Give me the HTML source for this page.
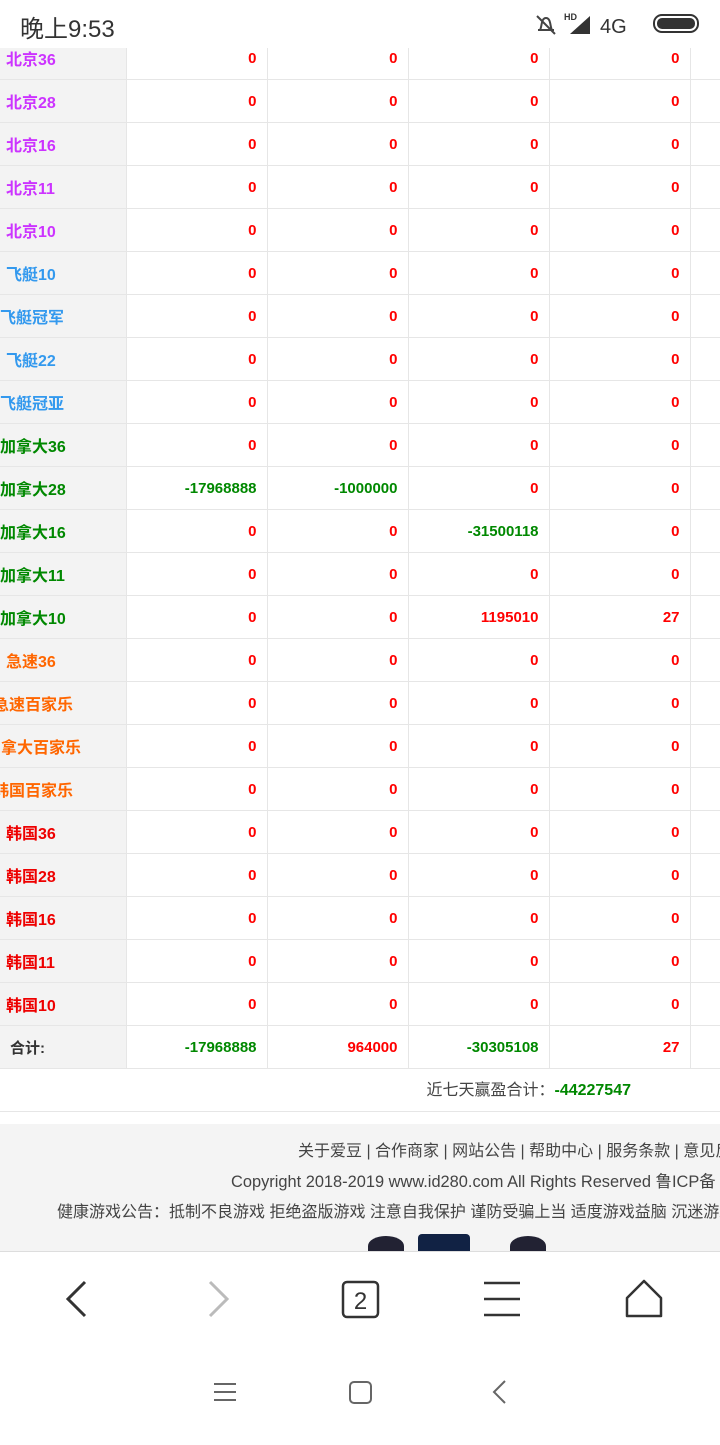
<!DOCTYPE html>
<html><head><meta charset="utf-8"><style>
*{margin:0;padding:0;box-sizing:border-box}
body{width:720px;height:1440px;overflow:hidden;background:#fff;font-family:"Liberation Sans","Noto Sans CJK SC",sans-serif;position:relative}
.sb{position:absolute;top:0;left:0;width:720px;height:48px;background:#fff;z-index:5}
.sb .t{position:absolute;left:20px;top:9px;font-size:24px;color:#333}
table{position:absolute;top:36px;left:0;border-collapse:collapse;width:730px;table-layout:fixed}
td{height:43px;border:1px solid #e6e6e6;font-size:15px;font-weight:bold;text-align:right;padding-right:10px;color:#f00;white-space:nowrap;overflow:hidden}
td.l{background:#f3f3f3;text-align:left;padding-left:6px;padding-right:0;font-size:16px;border-left:none}
.p{color:#c3f}.b{color:#39e}.g{color:#080}.o{color:#f60}.r{color:#e00}.k{color:#333}
td.gn{color:#080}
.sum{position:absolute;top:1069px;left:0;width:720px;height:43px;border-bottom:1px solid #e6e6e6;font-size:16px;color:#444;text-align:right;padding-right:89px;line-height:43px}
.ft{position:absolute;top:1124px;left:0;width:720px;height:127px;background:#f4f4f4;font-size:16px;color:#444;white-space:nowrap;overflow:hidden}
.ft div{position:absolute}
.bb{position:absolute;top:1251px;left:0;width:720px;height:93px;background:#fff;border-top:1px solid #ddd}
.nv{position:absolute;top:1344px;left:0;width:720px;height:96px;background:#fff}
</style></head><body>
<div class="sb"><span class="t">晚上9:53</span>
<svg style="position:absolute;left:534px;top:12px" width="170" height="26"><path d="M4 18h16M6 18c2-3 1-12 6-12s4 9 6 12M3 4l18 18" stroke="#444" stroke-width="2" fill="none"/><text x="30" y="8" font-size="9" font-weight="bold" fill="#333" font-family="Liberation Sans">HD</text><path d="M36 22l20-18v18z" fill="#333"/><text x="66" y="21" font-size="20" fill="#333" font-family="Liberation Sans">4G</text><rect x="120" y="3" width="44" height="17" rx="8" fill="none" stroke="#333" stroke-width="2"/><rect x="123" y="6" width="38" height="11" rx="5" fill="#333"/></svg></div>
<table>
<colgroup><col style="width:126px"><col style="width:141px"><col style="width:141px"><col style="width:141px"><col style="width:141px"><col style="width:40px"></colgroup>
<tr><td class="l p">北京36</td><td>0</td><td>0</td><td>0</td><td>0</td><td></td></tr>
<tr><td class="l p">北京28</td><td>0</td><td>0</td><td>0</td><td>0</td><td></td></tr>
<tr><td class="l p">北京16</td><td>0</td><td>0</td><td>0</td><td>0</td><td></td></tr>
<tr><td class="l p">北京11</td><td>0</td><td>0</td><td>0</td><td>0</td><td></td></tr>
<tr><td class="l p">北京10</td><td>0</td><td>0</td><td>0</td><td>0</td><td></td></tr>
<tr><td class="l b">飞艇10</td><td>0</td><td>0</td><td>0</td><td>0</td><td></td></tr>
<tr><td class="l b" style="padding-left:0">飞艇冠军</td><td>0</td><td>0</td><td>0</td><td>0</td><td></td></tr>
<tr><td class="l b">飞艇22</td><td>0</td><td>0</td><td>0</td><td>0</td><td></td></tr>
<tr><td class="l b" style="padding-left:0">飞艇冠亚</td><td>0</td><td>0</td><td>0</td><td>0</td><td></td></tr>
<tr><td class="l g" style="padding-left:0">加拿大36</td><td>0</td><td>0</td><td>0</td><td>0</td><td></td></tr>
<tr><td class="l g" style="padding-left:0">加拿大28</td><td class="gn">-17968888</td><td class="gn">-1000000</td><td>0</td><td>0</td><td></td></tr>
<tr><td class="l g" style="padding-left:0">加拿大16</td><td>0</td><td>0</td><td class="gn">-31500118</td><td>0</td><td></td></tr>
<tr><td class="l g" style="padding-left:0">加拿大11</td><td>0</td><td>0</td><td>0</td><td>0</td><td></td></tr>
<tr><td class="l g" style="padding-left:0">加拿大10</td><td>0</td><td>0</td><td>1195010</td><td>27</td><td></td></tr>
<tr><td class="l o">急速36</td><td>0</td><td>0</td><td>0</td><td>0</td><td></td></tr>
<tr><td class="l o" style="padding-left:0;text-indent:-7px">急速百家乐</td><td>0</td><td>0</td><td>0</td><td>0</td><td></td></tr>
<tr><td class="l o" style="padding-left:0;text-indent:-15px">加拿大百家乐</td><td>0</td><td>0</td><td>0</td><td>0</td><td></td></tr>
<tr><td class="l o" style="padding-left:0;text-indent:-7px">韩国百家乐</td><td>0</td><td>0</td><td>0</td><td>0</td><td></td></tr>
<tr><td class="l r">韩国36</td><td>0</td><td>0</td><td>0</td><td>0</td><td></td></tr>
<tr><td class="l r">韩国28</td><td>0</td><td>0</td><td>0</td><td>0</td><td></td></tr>
<tr><td class="l r">韩国16</td><td>0</td><td>0</td><td>0</td><td>0</td><td></td></tr>
<tr><td class="l r">韩国11</td><td>0</td><td>0</td><td>0</td><td>0</td><td></td></tr>
<tr><td class="l r">韩国10</td><td>0</td><td>0</td><td>0</td><td>0</td><td></td></tr>
<tr><td class="l k" style="padding-left:10px;font-size:15px">合计:</td><td class="gn">-17968888</td><td>964000</td><td class="gn">-30305108</td><td>27</td><td></td></tr>
</table>
<div class="sum">近七天赢盈合计：<b style="color:#080">-44227547</b></div>
<div class="ft">
<div style="top:13px;left:298px">关于爱豆 | 合作商家 | 网站公告 | 帮助中心 | 服务条款 | 意见反馈</div>
<div style="top:44px;left:231px;font-size:16.4px">Copyright 2018-2019 www.id280.com All Rights Reserved 鲁ICP备</div>
<div style="top:74px;left:57px">健康游戏公告：抵制不良游戏 拒绝盗版游戏 注意自我保护 谨防受骗上当 适度游戏益脑 沉迷游戏</div>
<div style="top:112px;left:368px;width:36px;height:20px;background:#223;border-radius:50% 50% 0 0"></div>
<div style="top:110px;left:418px;width:52px;height:20px;background:#124;border-radius:4px 4px 0 0"></div>
<div style="top:112px;left:510px;width:36px;height:20px;background:#223;border-radius:50% 50% 0 0"></div>
</div>
<div class="bb"><svg width="720" height="93">
<path d="M85 30l-17 17 17 17" stroke="#333" stroke-width="3" fill="none"/>
<path d="M210 30l17 17-17 17" stroke="#bbb" stroke-width="3" fill="none"/>
<rect x="343" y="30" width="35" height="35" rx="4" fill="none" stroke="#333" stroke-width="2.5"/><text x="360.5" y="57" font-size="24" text-anchor="middle" fill="#333" font-family="Liberation Sans">2</text>
<path d="M484 31h36M484 47h36M484 63h36" stroke="#333" stroke-width="2.5"/>
<path d="M627 46l17-17 17 17v18h-34z" stroke="#333" stroke-width="2.5" fill="none" stroke-linejoin="round"/>
</svg></div>
<div class="nv"><svg width="720" height="96">
<path d="M214 40h22M214 48h22M214 56h22" stroke="#666" stroke-width="2"/>
<rect x="350" y="38" width="21" height="21" rx="4" fill="none" stroke="#666" stroke-width="2"/>
<path d="M505 37l-11 11 11 11" stroke="#666" stroke-width="2" fill="none"/>
</svg></div>
</body></html>
